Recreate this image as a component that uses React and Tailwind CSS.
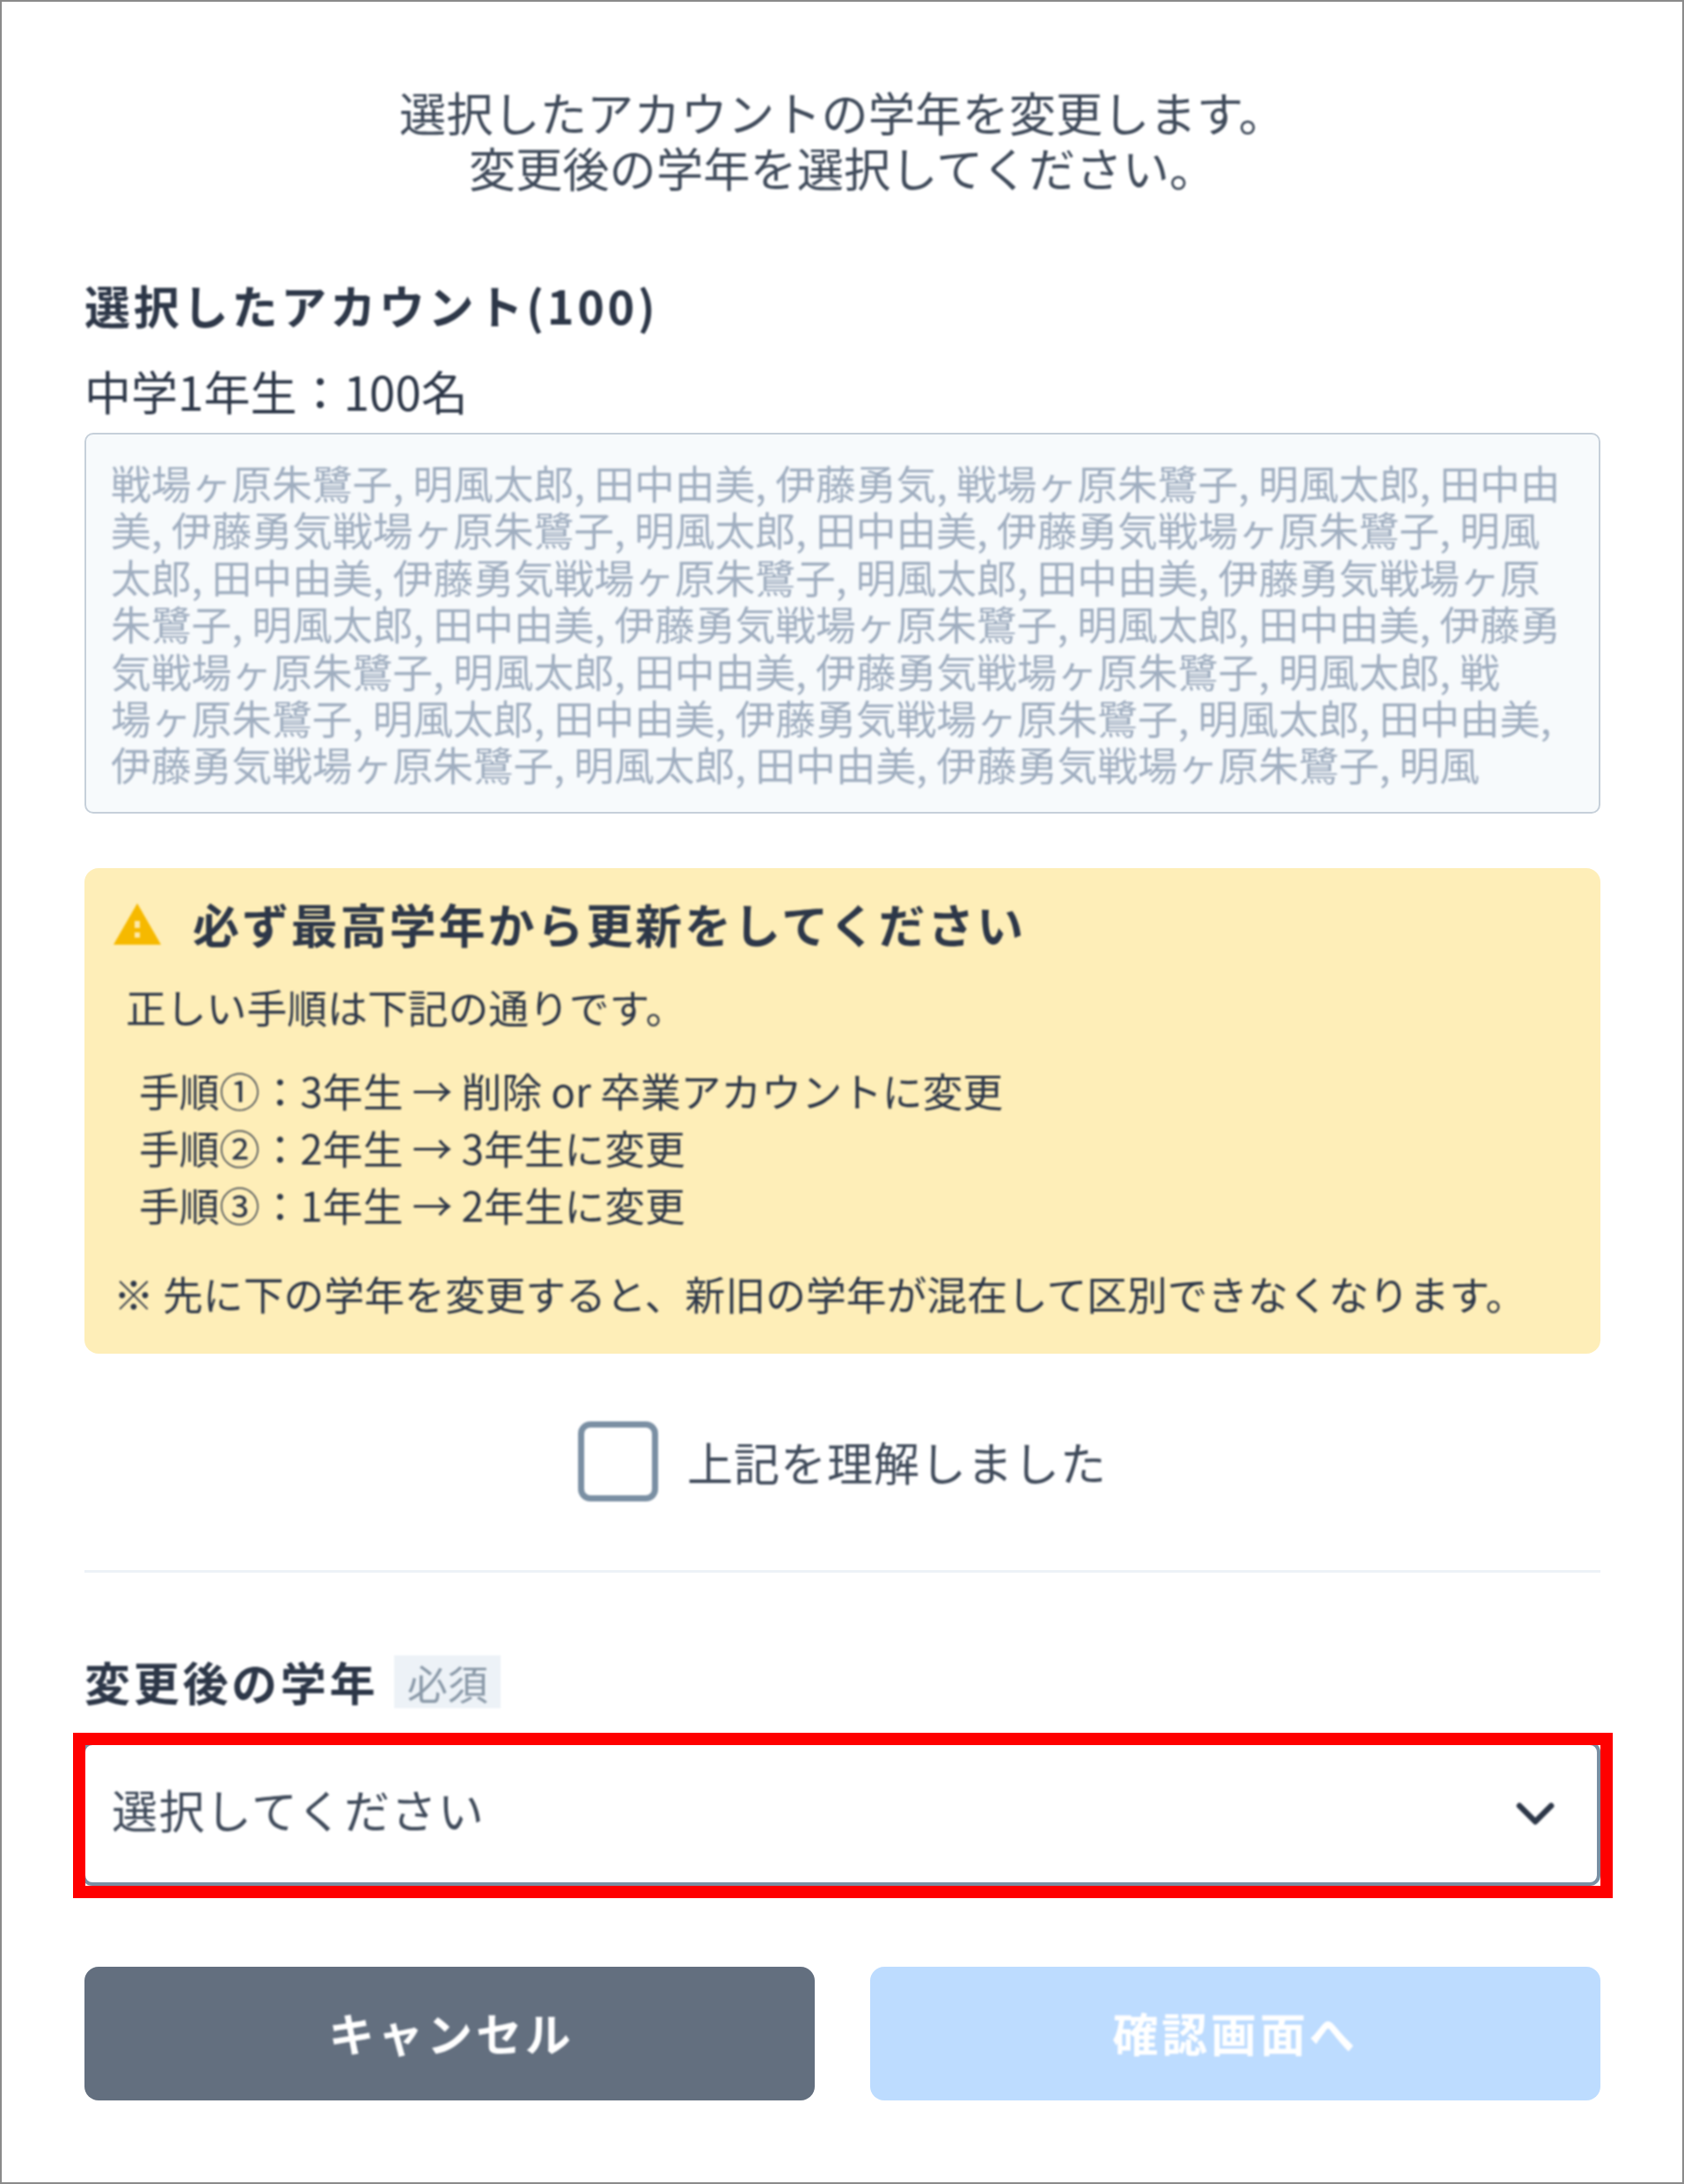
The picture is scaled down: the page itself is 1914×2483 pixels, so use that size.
import React from 'react';
import { ChevronDown } from 'lucide-react';

const NAME_LINES = [
  '戦場ヶ原朱鷺子, 明風太郎, 田中由美, 伊藤勇気, 戦場ヶ原朱鷺子, 明風太郎, 田中由',
  '美, 伊藤勇気戦場ヶ原朱鷺子, 明風太郎, 田中由美, 伊藤勇気戦場ヶ原朱鷺子, 明風',
  '太郎, 田中由美, 伊藤勇気戦場ヶ原朱鷺子, 明風太郎, 田中由美, 伊藤勇気戦場ヶ原',
  '朱鷺子, 明風太郎, 田中由美, 伊藤勇気戦場ヶ原朱鷺子, 明風太郎, 田中由美, 伊藤勇',
  '気戦場ヶ原朱鷺子, 明風太郎, 田中由美, 伊藤勇気戦場ヶ原朱鷺子, 明風太郎, 戦',
  '場ヶ原朱鷺子, 明風太郎, 田中由美, 伊藤勇気戦場ヶ原朱鷺子, 明風太郎, 田中由美,',
  '伊藤勇気戦場ヶ原朱鷺子, 明風太郎, 田中由美, 伊藤勇気戦場ヶ原朱鷺子, 明風',
];

const STEPS = ['手順①：3年生 → 削除 or 卒業アカウントに変更', '手順②：2年生 → 3年生に変更', '手順③：1年生 → 2年生に変更'];

function WarningIcon() {
  return (
    <svg viewBox="0 0 54 47" className="w-[54px] h-[47px] shrink-0">
      <path d="M27 0 L54 47 L0 47 Z" fill="#f6b900" />
      <rect x="24" y="20" width="6" height="8" fill="#fde9a8" />
      <rect x="24" y="33" width="6" height="6" fill="#fde9a8" />
    </svg>
  );
}

export default function App() {
  return (
    <div className="w-[1914px] h-[2483px] bg-white border-2 border-[#8a8a8a] pl-[94px] pr-[93px] text-[#2d3748] font-['Noto_Sans_CJK_JP','Noto_Sans',sans-serif]">
      <div className="pt-[93px] text-center text-[53.3px] leading-[63px] text-[#3f4a5a] blur-[0.9px]">
        <p>選択したアカウントの学年を変更します。</p>
        <p>変更後の学年を選択してください。</p>
      </div>

      <h2 className="mt-[91px] text-[52px] leading-[70px] font-bold tracking-[3.8px] blur-[0.9px]">選択したアカウント(100)</h2>
      <p className="mt-[27px] text-[53px] leading-[70px] blur-[0.9px]">中学1年生：100名</p>

      <div className="mt-[13px] h-[433px] rounded-[10px] border-2 border-[#c6d0da] bg-[#f7fafc] pl-[28px] pt-[28px] text-[45.75px] leading-[53.4px] text-[#a0aec0] whitespace-nowrap overflow-hidden">
        <div className="blur-[0.9px]">
          {NAME_LINES.map((line) => <div key={line}>{line}</div>)}
        </div>
      </div>

      <div className="mt-[62px] h-[552px] rounded-[16px] bg-[#feeeb8] px-[33px] pt-[40px]">
        <div className="blur-[0.9px]">
          <div className="flex items-center gap-[36px] h-[47px]">
            <WarningIcon />
            <h3 className="text-[53px] font-bold tracking-[2.9px]">必ず最高学年から更新をしてください</h3>
          </div>
          <p className="mt-[40px] ml-[14px] text-[45.8px] leading-[60px]">正しい手順は下記の通りです。</p>
          <ul className="mt-[33px] ml-[29px] text-[45.8px] leading-[65px]">
            {STEPS.map((step) => <li key={step}>{step}</li>)}
          </ul>
          <p className="mt-[38px] text-[45.8px] leading-[60px] whitespace-nowrap"><span className="font-bold">※</span> 先に下の学年を変更すると、新旧の学年が混在して区別できなくなります。</p>
        </div>
      </div>

      <label className="mt-[77px] flex items-center justify-center gap-[33px] blur-[0.9px]">
        <span className="w-[91px] h-[91px] rounded-[14px] border-[7px] border-[#7a8fa3] bg-white" />
        <span className="text-[52px] leading-[91px] tracking-[1px] text-[#3f4a5a]">上記を理解しました</span>
      </label>

      <hr className="mt-[78px] border-0 h-[3px] bg-[#edf2f7]" />

      <div className="mt-[94px] flex items-center gap-[18px] blur-[0.9px]">
        <span className="text-[52px] leading-[60px] font-bold tracking-[3.7px]">変更後の学年</span>
        <span className="h-[60px] w-[121px] bg-[#edf2f7] text-center text-[46px] leading-[60px] text-[#8a99a8]">必須</span>
      </div>

      <div className="relative mt-[38px] -ml-[3px]">
        <div className="flex items-center justify-between h-[164px] rounded-[12px] border-4 border-[#7a8fa3] pl-[30px] pr-[50px] text-[52px] tracking-[1.4px] text-[#3f4a5a]">
          <span className="mb-[10px] blur-[0.9px]">選択してください</span>
          <ChevronDown className="w-[72px] h-[72px] -mr-[16px] text-[#2d3748] blur-[0.9px]" strokeWidth={2.2} />
        </div>
        <div className="absolute -left-[10px] -top-[10px] -right-[14px] -bottom-[14px] border-[14px] border-[#ff0000]" />
      </div>

      <div className="mt-[92px] grid grid-cols-2 gap-[63px]">
        <button className="h-[152px] rounded-[16px] bg-[#636f7f] pb-[3px] pl-[4px] text-white text-[52px] font-bold tracking-[3.8px]"><span className="blur-[0.9px]">キャンセル</span></button>
        <button className="h-[152px] rounded-[16px] bg-[#bddcff] pb-[3px] text-white text-[52px] font-bold tracking-[3.8px]"><span className="blur-[0.9px]">確認画面へ</span></button>
      </div>
    </div>
  );
}
